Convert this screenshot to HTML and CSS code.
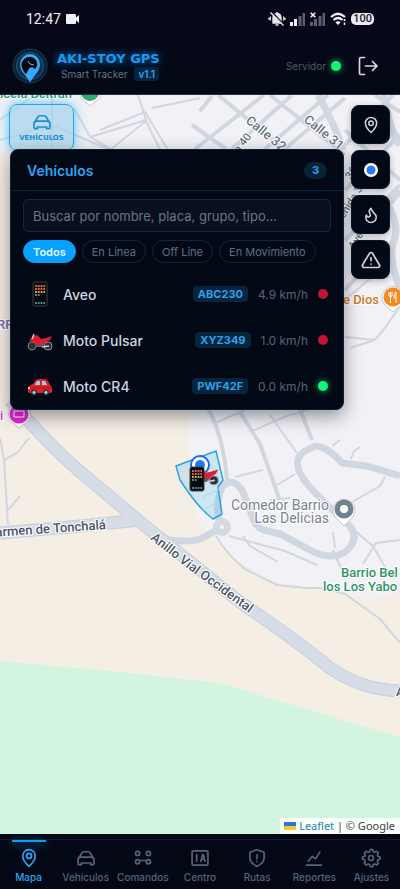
FILE: index.html
```html
<!DOCTYPE html>
<html lang="es">
<head>
    <meta charset="UTF-8">
    <meta name="viewport" content="width=device-width, initial-scale=1.0">
    <title>AKI-STOY GPS</title>
    <link rel="stylesheet" href="styles.css">
</head>
<body>
    <div class="status-bar">
        <span class="clock">12:47</span>
        <svg width="14" height="10" viewBox="0 0 14 10" fill="#f0f0f6"><path d="M1 0h8q1 0 1 1v2.500l3-2.500v8l-3-2.500V9q0 1-1 1H1Q0 10 0 9V1Q0 0 1 0z"/></svg>
        <div class="status-icons">
            <svg width="18" height="16" viewBox="0 0 18 16" fill="none" stroke="#e4e4ec" stroke-width="1.400">
                <path d="M5 12V7q0-4 4-4.500Q13 3 13 7v5z" fill="#e4e4ec"/><path d="M7.500 14h3M9 1v2M2.500 5.500q-1 2 0 4M15.500 5.500q1 2 0 4M.8 7v1.500M17.200 7v1.500"/>
                <path d="M4 1l13 14" stroke="#08081a" stroke-width="1.500"/><path d="M2.500 1.500l13 13"/>
            </svg>
            <svg width="16" height="14" viewBox="0 0 16 14"><path fill="#f0f0f6" d="M0 10h3v4H0zM4 7h3v7H4z"/><path fill="#5c5c6c" d="M8.500 4h3v10h-3zM12.500 1H15v13h-2.500z"/></svg>
            <svg width="16" height="14" viewBox="0 0 16 14"><path fill="#5c5c6c" d="M0 10h3v4H0zM4 7h3v7H4zM8.500 4h3v10h-3zM12.500 1H15v13h-2.500z"/><path d="M.7.700l4.600 4.600M5.300.700L.7 5.300" stroke="#f0f0f6" stroke-width="1.600"/></svg>
            <svg width="17" height="14" viewBox="0 0 17 14" fill="none" stroke="#f0f0f6" stroke-width="2.200"><path d="M1 5q7-6.500 14 0M3.500 8q4.500-4 9 0"/><path d="M8 13L5.300 10.300q2.700-2 5.400 0z" fill="#f0f0f6" stroke="none"/><path d="M14.500 7v2M14.500 10.500v2.500" stroke-width="1.600"/></svg>
            <span class="battery">100</span>
        </div>
    </div>

    <header class="header">
        <svg class="logo" width="36" height="36" viewBox="0 0 36 36">
            <circle cx="18" cy="18" r="17" fill="#0a2238" stroke="#173b5a"/>
            <circle cx="18" cy="18" r="13.500" fill="#102f4a" stroke="#24577d"/>
            <path d="M18 34L13 27Q8 22 8 16a10 10 0 0 1 20 0q0 6-5 11z" fill="#36aaff"/>
            <path d="M12 24q-5-8 0-13 7-5 12 1 3 5-1 9l-3-2-2 2-3 6z" fill="#05080f"/>
            <path d="M18 34l-4-8 4-7 5 7z" fill="#36aaff"/>
            <path d="M16 13l2 3 4 1" stroke="#66c6ff" fill="none"/>
        </svg>
        <div class="brand">
            <h1>AKI-STOY GPS</h1>
            <p>Smart Tracker <span class="version">v1.1</span></p>
        </div>
        <span class="server">Servidor <i class="dot online"></i></span>
        <button class="logout" aria-label="Salir">
            <svg width="20" height="20" viewBox="0 0 20 20" fill="none" stroke="#d3dbea" stroke-width="1.700" stroke-linecap="round" stroke-linejoin="round"><path d="M6.500 1.500H3q-1.500 0-1.500 1.500v14q0 1.500 1.500 1.500h3.500M7.500 10H19M14.500 5.500L19 10l-4.500 4.500"/></svg>
        </button>
    </header>

    <main class="map">
        <svg class="tiles" viewBox="0 95 400 739" preserveAspectRatio="xMidYMid slice">
            <rect y="95" width="400" height="739" fill="#f2f1f5"/>
            <path class="field" d="M0 150H186L190 410Q186 480 200 523Q220 550 245 565Q268 583 300 588L345 591L367 600L400 592V834H0z"/>
            <path class="park" d="M0 661L110 671L212 682L230 686L400 737V834H0z"/>
            <!-- streets -->
            <g class="street">
                <path d="M0 120L30 98M52 95V150M0 140L52 125L110 150M74 108L90 137L146 120L138 95M90 137L130 160M100 130L145 112L168 150M152 108L200 98M110 150L146 121L160 150"/>
                <path d="M345 300L380 270M345 337L375 340L350 348M375 340L385 328L400 306"/>
                <path d="M250 432L284 417L310 409M270 415L297 453M235 477L263 470M213 424L245 410M277 485L295 474M270 500L290 498"/>
                <path d="M332 446L340 440M351 459L354 451L360 447M385 477L380 486L352 502M355 531L373 546L390 576M363 564L376 543L400 540M335 548L333 532M342 570L333 550"/>
                <path d="M229 536L285 551L317 565M243 536L250 546L278 562M216 536Q228 556 245 569L277 585L307 588H322L345 594L380 619L400 643"/>
                <path d="M0 438L4 460L7 510L8 525M4 460L17 453L29 438M8 510L20 496"/>
            </g>
            <g class="road">
                <path d="M200 111L212 96M195 149L264 95M232 149L292 95M265 149L328 95M285 149L345 98M218 95L285 150M270 95L345 155M192 125L226 149M393 95L345 145M400 112L375 95M345 190L400 135M345 240L400 185M345 130L400 180M345 290L372 260"/>
                <path d="M202 398Q223 430 227 480M240 412L260 444L279 498M300 409L312 440"/>
            </g>
            <g class="avenue">
                <path d="M318 95Q335 125 343 150M384 95Q389 128 400 145M400 190L388 205Q400 225 394 240T400 290"/>
                <path d="M400 476Q380 470 367 466L342 463Q328 447 316 446Q299 452 298 460Q295 469 308 485Q324 503 350 526Q360 540 345 552Q330 561 310 550L280 534L264 530Q255 528 250 510L242 490Q232 476 222 487Q213 512 222 523"/>
                <path d="M152 537Q185 544 200 539L221 528"/>
            </g>
            <circle cx="222" cy="527" r="9" fill="#d3dae4"/><circle cx="222" cy="527" r="2" fill="#f2f1f5"/>
            <g class="highway">
                <path class="casing" d="M0 533L80 526L140 520M10 400Q55 452 90 480L140 522L240 602Q295 639 330 668Q362 690 400 691"/>
                <path class="fill" d="M0 533L80 526L140 520M10 400Q55 452 90 480L140 522L240 602Q295 639 330 668Q362 690 400 691"/>
            </g>
            <!-- geofence -->
            <path d="M176 466L216 451L223 480L218 487L222 514L213 519Q198 508 180 480z" fill="#4dbbe8" fill-opacity=".22" stroke="#27a4e5" stroke-width="1.500"/>
            <path d="M203 497l17-8M202 511l13-8M205 457l14 22" fill="none" stroke="#b4d8e6"/>
            <!-- labels -->
            <path id="anillo" d="M150 539L187 568L260 621" fill="none"/>
            <g class="label">
                <text x="106" y="529" text-anchor="end" transform="rotate(-4 106 529)">armen de Tonchalá</text>
                <text><textPath href="#anillo">Anillo Vial Occidental</textPath></text>
                <text x="396" y="696">A</text>
            </g>
            <g class="label light">
                <text x="245" y="122" transform="rotate(39 245 122)">Calle 32</text>
                <text x="303" y="121" transform="rotate(39 303 121)">Calle 31</text>
                <text class="small" x="232" y="162" transform="rotate(-52 232 162)">Cra 40</text>
                <text class="small" x="351" y="180" transform="rotate(-60 351 180)">36</text>
                <text class="small" x="354" y="250" transform="rotate(-58 354 250)">Ave</text>
                <text class="small" x="344" y="219" transform="rotate(-58 344 219)">enida 3</text>
            </g>
            <g class="label place">
                <text x="329" y="510" text-anchor="end">Comedor Barrio</text>
                <text x="329" y="523" text-anchor="end">Las Delicias</text>
            </g>
            <g class="label green">
                <text x="341" y="577">Barrio Bel</text>
                <text x="323" y="591">los Los Yabo</text>
                <text x="0" y="98">icela Beltran</text>
            </g>
            <text class="label orange" x="379" y="304" text-anchor="end">e Dios</text>
            <text class="label purple" x="-3" y="329">RF</text>
            <text class="label pink" x="0" y="420">i</text>
            <!-- place pins -->
            <path class="pin" d="M344 526l-8-8a11 11 0 1 1 16 0z"/><circle cx="344" cy="509" r="9.500" fill="#72858f"/><circle cx="344" cy="509" r="4" fill="#fff"/>
            <path class="pin" d="M393 312l-8-7a11 11 0 1 1 16 0z"/><circle cx="393" cy="297" r="9.500" fill="#f58a1f"/>
            <path d="M389 292v4q2 2 3 0v-4M390.500 292v11M396 303v-11q-2 2-2 6h2" stroke="#fff" fill="none"/>
            <path class="pin" d="M19 428l-7-6a11 11 0 1 1 15 0z"/><circle cx="19" cy="414" r="9.500" fill="#e524cf"/>
            <path d="M14 411h10v6H14z" fill="none" stroke="#fff"/>
            <path class="pin" d="M90 106l-9-8V88h19v10z"/><circle cx="90" cy="92" r="9" fill="#34a76f"/>
            <!-- current position and vehicles -->
            <circle cx="200" cy="465" r="9" fill="#fff" stroke="#1e66e8" stroke-width="2"/><circle cx="200" cy="465" r="5" fill="#2478ee"/>
            <use href="#moto" x="190" y="465" width="30" height="22"/>
            <use href="#phone" x="184" y="465" width="26" height="28"/>
        </svg>

        <button class="vehicles-btn">
            <svg width="20" height="20" viewBox="0 0 24 24"><use href="#car-line"/></svg>
            Vehículos
        </button>

        <div class="overlay">
            <section class="panel">
                <div class="panel-head">
                    <h2>Vehículos</h2>
                    <span class="count">3</span>
                </div>
                <div class="search">
                    <input type="text" aria-label="Buscar vehículo" placeholder="Buscar por nombre, placa, grupo, tipo...">
                </div>
                <div class="filters">
                    <button class="active">Todos</button>
                    <button>En Línea</button>
                    <button>Off Line</button>
                    <button>En Movimiento</button>
                </div>
                <ul class="vehicle-list">
                    <li>
                        <svg width="26" height="26" viewBox="0 0 26 26"><use href="#phone" width="26" height="26"/></svg>
                        <span class="name">Aveo</span>
                        <span class="plate">ABC230</span>
                        <span class="speed">4.9 km/h</span>
                        <i class="dot offline"></i>
                    </li>
                    <li>
                        <svg width="26" height="26" viewBox="0 0 26 26"><use href="#moto" y="5" width="26" height="20"/></svg>
                        <span class="name">Moto Pulsar</span>
                        <span class="plate">XYZ349</span>
                        <span class="speed">1.0 km/h</span>
                        <i class="dot offline"></i>
                    </li>
                    <li>
                        <svg width="26" height="26" viewBox="0 0 26 24">
                            <path d="M1 18v-4q1-3 5-4l3-4q1-1 4-1h4q3 0 4 2l2 4q2 1 2 4v3q0 1-2 1H3q-2 0-2-1z" fill="#e0202c"/>
                            <path d="M8 10l2-3h3v4H8zM15 7h3l2 4h-5z" fill="#8fd3ea"/>
                            <path d="M2 14h22" stroke="#a90f1d"/>
                            <circle cx="7" cy="18.500" r="3" fill="#33373f"/><circle cx="19" cy="18.500" r="3" fill="#33373f"/>
                            <circle cx="7" cy="18.500" r="1.400" fill="#ccd2d9"/><circle cx="19" cy="18.500" r="1.400" fill="#ccd2d9"/>
                            <path d="M1 13h2v2H1z" fill="#ffd34d"/>
                        </svg>
                        <span class="name">Moto CR4</span>
                        <span class="plate">PWF42F</span>
                        <span class="speed">0.0 km/h</span>
                        <i class="dot online"></i>
                    </li>
                </ul>
            </section>
            <div class="tools">
                <button aria-label="Mi ubicación"><svg width="18" height="18" viewBox="0 0 24 24"><use href="#pin-line"/></svg></button>
                <button aria-label="Centrar"><svg width="20" height="20" viewBox="0 0 20 20"><circle cx="10" cy="10" r="7" fill="#fff" stroke="none"/><circle cx="10" cy="10" r="4.500" fill="#257bf4" stroke="none"/></svg></button>
                <button aria-label="Mapa de calor"><svg width="18" height="18" viewBox="0 0 24 24"><path d="M8.500 14.500A2.500 2.500 0 0 0 11 12c0-1.380-.5-2-1-3-1.072-2.143-.224-4.054 2-6 .5 2.500 2 4.900 4 6.500 2 1.600 3 3.500 3 5.500a7 7 0 1 1-14 0c0-1.153.433-2.294 1-3a2.500 2.500 0 0 0 2.500 2.500z"/></svg></button>
                <button aria-label="Alertas"><svg width="20" height="20" viewBox="0 0 24 24"><path d="M10.300 3.900L1.800 18a2 2 0 0 0 1.700 3h17a2 2 0 0 0 1.700-3L13.700 3.900a2 2 0 0 0-3.400 0zM12 9v4M12 17v.1"/></svg></button>
            </div>
        </div>

        <div class="attribution">
            <svg width="12" height="8" viewBox="0 0 12 8"><path fill="#2f72dd" d="M0 0h12v4H0z"/><path fill="#f6cb2c" d="M0 4h12v4H0z"/></svg>
            <a href="#">Leaflet</a> | © Google
        </div>
    </main>

    <nav class="bottom-nav">
        <a class="active" href="#"><svg viewBox="0 0 24 24"><use href="#pin-line"/></svg>Mapa</a>
        <a href="#"><svg viewBox="0 0 24 24"><use href="#car-line"/></svg>Vehículos</a>
        <a href="#"><svg viewBox="0 0 24 24"><circle cx="5.500" cy="6.500" r="2.500"/><circle cx="18.500" cy="6.500" r="2.500"/><circle cx="5.500" cy="16.500" r="2.500"/><circle cx="18.500" cy="16.500" r="2.500"/><path d="M8 15h8"/></svg>Comandos</a>
        <a href="#"><svg viewBox="0 0 24 24"><rect x="2.500" y="3.500" width="19" height="17" rx="2"/><path d="M8 8v8M13 16l2-8h1l2 8M14 13.500h3"/></svg>Centro</a>
        <a href="#"><svg viewBox="0 0 24 24"><path d="M12 22s8.500-3.500 8.500-10V5L12 2 3.500 5v7c0 6.500 8.500 10 8.500 10zM12 8v5M12 16v.1"/></svg>Rutas</a>
        <a href="#"><svg viewBox="0 0 24 24"><path d="M3 20.500h18M5 16l5-6 4 3 5-8"/></svg>Reportes</a>
        <a href="#"><svg viewBox="0 0 24 24"><path d="M12 1.500l2 .3.800 2.700 1.700.7L19 3.900 20.900 6l-1.400 2.300.7 1.700 2.500.7v2.800l-2.500.8-.7 1.700 1.300 2.400-2 2-2.300-1.300-1.700.7-.8 2.700h-2.800l-.9-2.700-1.700-.7L6 20.400l-2-2L5.200 16l-.7-1.700-2.700-.8v-2.800l2.700-.7.7-1.700L4 6l2-2.100 2.500 1.300 1.700-.7.900-2.700z"/><circle cx="12" cy="12" r="3"/></svg>Ajustes</a>
    </nav>

    <svg class="defs">
        <symbol id="pin-line" viewBox="0 0 24 24"><path d="M12 22s7.500-7 7.500-12.500a7.500 7.500 0 0 0-15 0C4.500 15 12 22 12 22z"/><circle cx="12" cy="9.500" r="3"/></symbol>
        <symbol id="car-line" viewBox="0 0 24 24"><path d="M4 11l3-5q.5-1.500 2-1.500h6q1.500 0 2 1.500l3 5M3.500 20h3v-2h11v2h3q1 0 1-1v-5q0-3-3-3h-13q-3 0-3 3v5q0 1 1 1z"/></symbol>
        <symbol id="phone" viewBox="0 0 26 26">
            <rect x="6" y="1" width="14" height="24" rx="2" fill="#07090d" stroke="#3a3c42"/>
            <path d="M8 5h10M8 8h10" stroke="#e9624c" stroke-width="2" stroke-dasharray="1.800 1"/>
            <path d="M8 11h10" stroke="#e8a93c" stroke-width="2" stroke-dasharray="1.800 1"/>
            <path d="M8 14h5M8 22h10" stroke="#62bce0" stroke-width="1.600" stroke-dasharray="1.800 1"/>
        </symbol>
        <symbol id="moto" viewBox="0 0 26 20">
            <circle cx="5" cy="14" r="4" fill="#2c2e35" stroke="#777d87"/><circle cx="21" cy="14" r="4" fill="#2c2e35" stroke="#8b929c"/>
            <path d="M2 9l4-5 4-1 4 4 5-1 6-2-2 4-5 3-3 4H9l-2-5z" fill="#df1c32"/>
            <path d="M10 12h5l2 3H9z" fill="#565b66"/><path d="M7 2L5 7M15 15l7-1" stroke="#c9ced6" stroke-width="1.500"/>
        </symbol>
    </svg>
</body>
</html>
```
FILE: styles.css
```css
* {
    box-sizing: border-box;
}
body {
    margin: 0;
    min-height: 100vh;
    display: flex;
    flex-direction: column;
    background: #030711;
    color: #d3dbea;
    font-family: Inter, "Liberation Sans", sans-serif;
}
h1, h2, p, ul {
    margin: 0;
    padding: 0;
}
button {
    font-family: inherit;
    cursor: pointer;
}
.defs {
    position: absolute;
    width: 0;
    height: 0;
}

/* status bar */
.status-bar {
    display: flex;
    align-items: center;
    gap: 5px;
    height: 38px;
    padding: 0 26px;
    background: #07071a;
}
.clock {
    font: 14px/20px Roboto, sans-serif;
    color: #f0f0f6;
}
.status-icons {
    display: flex;
    align-items: center;
    gap: 4px;
    margin-left: auto;
}
.battery {
    padding: 0 2px;
    border-radius: 5px;
    background: #ecebf2;
    color: #14141f;
    font: 500 11px/12px Roboto, sans-serif;
}

/* header */
.header {
    display: flex;
    align-items: center;
    height: 57px;
    padding: 0 22px 0 12px;
    background: linear-gradient(#050819, #030912);
    border-bottom: 1px solid #17324f;
}
.brand {
    margin-left: 9px;
}
.brand h1 {
    color: #159cf3;
    font: bold 13px/16px "DejaVu Sans", sans-serif;
    text-shadow: 0 0 8px #0a84dd;
}
.brand p {
    margin-left: 4px;
    color: #67748a;
    font-size: 10px;
    line-height: 14px;
}
.version {
    display: inline-block;
    margin-left: 4px;
    padding: 0 4px;
    border-radius: 4px;
    background: #06243d;
    color: #2aa5f5;
    font-weight: 600;
}
.server {
    display: flex;
    align-items: center;
    gap: 5px;
    margin-left: auto;
    color: #4d596d;
    font-size: 10px;
}
.dot {
    flex: none;
    width: 10px;
    height: 10px;
    border-radius: 50%;
}
.online {
    background: #14f57c;
    box-shadow: 0 0 7px #0fae5a;
}
.offline {
    background: #c01633;
}
.logout {
    display: flex;
    margin-left: 17px;
    padding: 0;
    border: 0;
    background: none;
}

/* map */
.map {
    position: relative;
    flex: 1;
    display: flex;
    flex-direction: column;
    padding: 9px 10px 0 9px;
    overflow: hidden;
}
.tiles {
    position: absolute;
    inset: 0;
    width: 100%;
    height: 100%;
}
.field {
    fill: #f5eee4;
}
.park {
    fill: #d3f5e0;
}
.street, .road, .avenue, .highway {
    fill: none;
    stroke: #d0d7e1;
    stroke-linejoin: round;
}
.street {
    stroke-width: 2;
}
.road {
    stroke-width: 4;
}
.avenue {
    stroke-width: 7;
}
.casing {
    stroke: #c5cedc;
    stroke-width: 13;
}
.fill {
    stroke: #d7dde6;
    stroke-width: 11;
}
.label {
    fill: #4b5465;
    stroke: #fff;
    stroke-width: 2px;
    paint-order: stroke;
    font: 500 13px Roboto, sans-serif;
}
.light {
    fill: #697481;
}
.small {
    font-size: 11px;
}
.place {
    fill: #75848d;
    font-weight: 400;
    font-size: 14px;
}
.green {
    fill: #2f9365;
}
.orange {
    fill: #cf7429;
}
.purple {
    fill: #7668ad;
}
.pink {
    fill: #d63cc5;
}
.pin {
    fill: #fff;
    stroke: #c4c8cc;
}
.vehicles-btn {
    position: relative;
    align-self: flex-start;
    display: flex;
    flex-direction: column;
    align-items: center;
    justify-content: center;
    gap: 1px;
    width: 65px;
    height: 47px;
    padding: 0;
    border: 1px solid #25a5eb;
    border-radius: 8px;
    background: rgba(164, 211, 236, .7);
    box-shadow: 0 0 12px #54c4f4;
    color: #198fd1;
    font: bold 7px/10px "DejaVu Sans", sans-serif;
    text-transform: uppercase;
}
.vehicles-btn svg, .tools svg, .bottom-nav svg {
    fill: none;
    stroke: currentColor;
    stroke-width: 2;
    stroke-linecap: round;
    stroke-linejoin: round;
}
.overlay {
    position: relative;
    display: flex;
    align-items: flex-start;
    gap: 7px;
    margin: -2px 0 0 1px;
}
.panel {
    flex: 1;
    border: 1px solid #0b2134;
    border-radius: 8px;
    background: #030914;
    box-shadow: 0 6px 18px rgba(20, 24, 40, .45);
}
.panel-head {
    display: flex;
    align-items: center;
    justify-content: space-between;
    height: 41px;
    padding: 0 16px;
    border-bottom: 1px solid #082842;
}
.panel-head h2 {
    color: #2da5f3;
    font-size: 14px;
    font-weight: 600;
}
.count {
    padding: 0 8px;
    border-radius: 9px;
    background: #062339;
    color: #2a9fec;
    font-size: 11px;
    font-weight: 700;
    line-height: 17px;
}
.search {
    padding: 8px 12px;
}
.search input {
    display: block;
    width: 100%;
    height: 33px;
    padding: 0 9px;
    border: 1px solid #0b2c47;
    border-radius: 5px;
    background: #080f1e;
    color: #d3dbea;
    font: 13px Inter, sans-serif;
}
.search input::placeholder {
    color: #6b7587;
}
.filters {
    display: flex;
    gap: 6px;
    padding: 0 12px 8px;
}
.filters button {
    height: 23px;
    padding: 0 9px;
    border: 1px solid #0c2940;
    border-radius: 12px;
    background: none;
    color: #5f6d83;
    font-size: 11px;
    white-space: nowrap;
}
.filters .active {
    border-color: #07a2ff;
    background: #07a2ff;
    color: #e5f6ff;
    font-weight: 600;
}
.vehicle-list {
    list-style: none;
}
.vehicle-list li {
    display: flex;
    align-items: center;
    gap: 10px;
    height: 46px;
    padding: 0 15px 0 16px;
}
.name {
    flex: 1;
    color: #cbd4e4;
    font-size: 14px;
    font-weight: 500;
}
.plate {
    padding: 0 5px;
    border-radius: 4px;
    background: #06243b;
    color: #2da2ef;
    font-size: 11px;
    font-weight: 700;
    line-height: 16px;
}
.speed {
    color: #56647a;
    font-size: 12px;
}
.tools {
    display: flex;
    flex-direction: column;
    gap: 6px;
    margin-top: -44px;
}
.tools button {
    display: flex;
    align-items: center;
    justify-content: center;
    width: 39px;
    height: 39px;
    padding: 0;
    border: 1px solid #071a2a;
    border-radius: 8px;
    background: #030914;
    box-shadow: 0 2px 6px rgba(20, 24, 40, .3);
    color: #cbd5e7;
}
.attribution {
    position: absolute;
    right: 0;
    bottom: 0;
    padding: 0 5px 0 4px;
    background: rgba(255, 255, 255, .85);
    color: #3c4248;
    font: 11px/16px "Noto Sans", sans-serif;
}
.attribution a {
    color: #1c7fb5;
    text-decoration: none;
}

/* bottom navigation */
.bottom-nav {
    display: flex;
    height: 55px;
    padding-top: 5px;
    background: #030814;
}
.bottom-nav a {
    position: relative;
    flex: 1 1 0;
    min-width: 0;
    display: flex;
    flex-direction: column;
    align-items: center;
    gap: 3px;
    padding-top: 8px;
    border-top: 1px solid #101a29;
    color: #55647b;
    font-size: 10px;
    font-weight: 500;
    line-height: 12px;
    text-decoration: none;
}
.bottom-nav svg {
    width: 20px;
    height: 20px;
}
.bottom-nav .active {
    color: #2ba6f5;
}
.bottom-nav .active::before {
    content: "";
    position: absolute;
    top: 0;
    width: 34px;
    height: 2px;
    background: #159eef;
    box-shadow: 0 2px 8px #0784ce;
}
```
